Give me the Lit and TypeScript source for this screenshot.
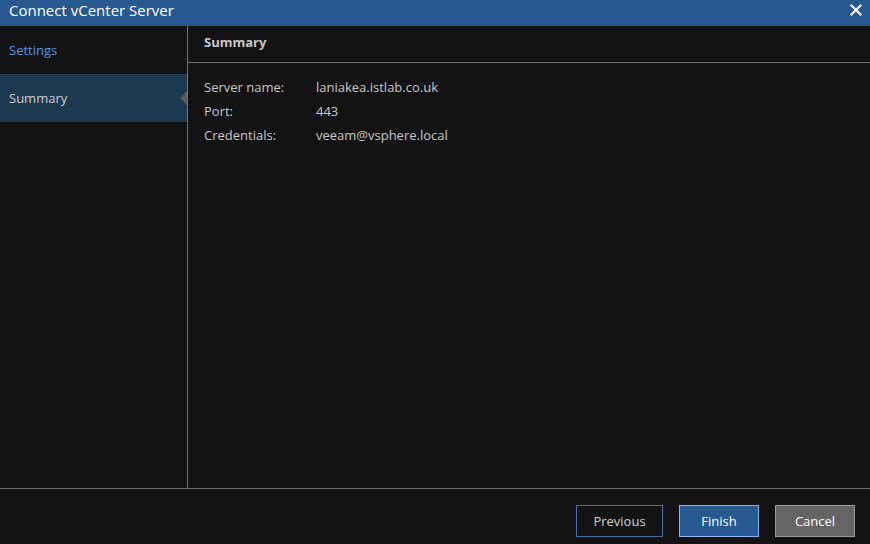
import { LitElement, html, css } from "lit";
import { customElement, state } from "lit/decorators.js";

@customElement("app-root")
export class AppRoot extends LitElement {
  @state() private step = "Summary";

  private steps = ["Settings", "Summary"];

  private details = [
    ["Server name:", "laniakea.istlab.co.uk"],
    ["Port:", "443"],
    ["Credentials:", "veeam@vsphere.local"],
  ];

  static styles = css`
    :host {
      display: flex;
      flex-direction: column;
      min-height: 100vh;
      background: #131313;
      color: #c8c8c8;
      font: 13px/24px "Open Sans", "Noto Sans", sans-serif;
    }
    * {
      box-sizing: border-box;
    }
    button {
      font: inherit;
      cursor: pointer;
    }
    .titlebar {
      display: flex;
      justify-content: space-between;
      align-items: flex-start;
      height: 26px;
      padding: 0 8px 0 9px;
      background: #27588f;
      color: #fff;
    }
    .title {
      margin: 0;
      font-size: 15px;
      font-weight: 400;
      line-height: 20px;
    }
    .close {
      display: flex;
      padding: 4px 0;
      border: 0;
      background: none;
      color: inherit;
    }
    .body {
      display: flex;
      flex: 1;
    }
    .steps {
      flex: none;
      width: 188px;
      border-right: 1px solid #747474;
    }
    .step {
      display: flex;
      align-items: center;
      justify-content: space-between;
      height: 48px;
      padding-left: 9px;
      color: #5797e4;
      text-decoration: none;
    }
    .step[aria-current] {
      background: #1c394f;
      color: #d0d0d0;
    }
    .content {
      flex: 1;
      min-width: 0;
    }
    .heading {
      margin: 0;
      padding: 4px 16px 8px;
      border-bottom: 1px solid #747474;
      font-size: 13px;
      font-weight: 700;
      line-height: 24px;
    }
    .details {
      display: grid;
      grid-template-columns: 112px 1fr;
      margin: 0;
      padding: 12px 16px;
    }
    .details dd {
      margin: 0;
    }
    .footer {
      display: flex;
      justify-content: flex-end;
      gap: 16px;
      padding: 16px 15px 7px;
      border-top: 1px solid #747474;
    }
    .button {
      min-width: 80px;
      height: 32px;
      padding: 0 16px;
      border: 1px solid #4a6fa8;
      background: #131313;
      color: #d0d0d0;
      line-height: 30px;
    }
    .back {
      min-width: 87px;
    }
    .primary {
      border-color: #8ab4f8;
      background: #27588f;
      color: #fff;
    }
    .neutral {
      border-color: #9a9a9a;
      background: #656565;
      color: #fff;
    }
  `;

  render() {
    return html`
      <header class="titlebar">
        <h1 class="title">Connect vCenter Server</h1>
        <button class="close" aria-label="Close">
          <svg width="12" height="12" viewBox="0 0 12 12" stroke="currentColor" stroke-width="2">
            <path d="M0.7 0.7L11.3 11.3M11.3 0.7L0.7 11.3" />
          </svg>
        </button>
      </header>
      <div class="body">
        <nav class="steps" aria-label="Steps">
          ${this.steps.map((name) =>
            name === this.step
              ? html`<a class="step" href="#${name}" aria-current="step"
                  >${name}<svg width="7" height="14" viewBox="0 0 7 14" fill="#5d5d5d">
                    <path d="M7 0V14L0 7Z" /></svg
                ></a>`
              : html`<a class="step" href="#${name}">${name}</a>`
          )}
        </nav>
        <main class="content">
          <h2 class="heading">Summary</h2>
          <dl class="details">
            ${this.details.map(([label, value]) => html`<dt>${label}</dt><dd>${value}</dd>`)}
          </dl>
        </main>
      </div>
      <footer class="footer">
        <button class="button back">Previous</button>
        <button class="button primary">Finish</button>
        <button class="button neutral">Cancel</button>
      </footer>
    `;
  }
}
